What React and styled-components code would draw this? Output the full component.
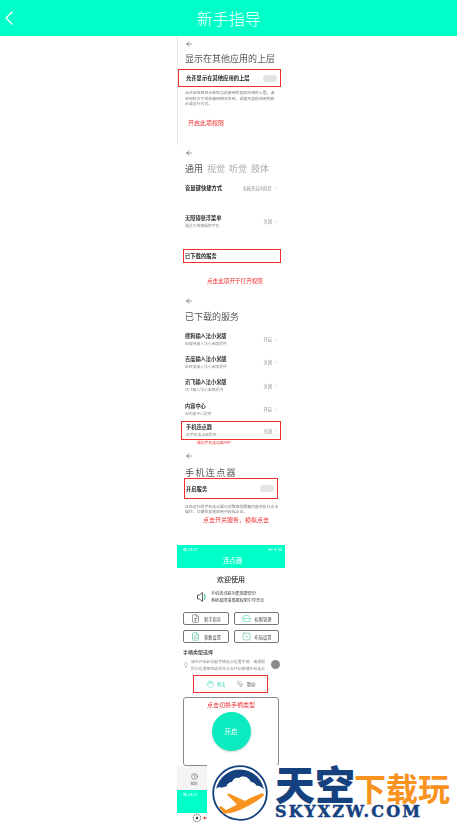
import React from 'react';
import styled, { createGlobalStyle } from 'styled-components';
import { ChevronRight, ArrowLeft, ChevronLeft, FileType, HardDrive, FileText, SquareDot, Hand, MousePointerClick, Lightbulb, HelpCircle } from 'lucide-react';

const GREEN = '#00ffc8';
const RED = '#ee3030';
const FONT = '"Noto Sans CJK SC", "Noto Sans", sans-serif';

const Global = createGlobalStyle`
  html, body { margin: 0; padding: 0; background: #fff; overflow: hidden; }
  body { font-family: ${FONT}; width: 457px; height: 823px; }
  * { box-sizing: border-box; }
`;

const Page = styled.div`
  position: relative;
  width: 457px;
  height: 823px;
  overflow: hidden;
`;
const Header = styled.header`
  height: 36px;
  background: ${GREEN};
  color: #fff;
  display: flex;
  align-items: center;
  justify-content: center;
  position: relative;
  font-size: 16px;
  font-weight: 300;
`;
const HeaderBack = styled.span`
  position: absolute;
  left: -3px;
  top: 6px;
  display: flex;
  color: #fff;
`;
const Column = styled.main`
  width: 108px;
  margin-left: 177px;
  filter: blur(0.4px);
`;
const Section = styled.section`
  height: ${p => p.$h}px;
  padding: ${p => p.$top}px 4px 0 8px;
  ${p => p.$line && 'border-left: 1px solid #e6e6e6; padding-left: 7px;'}
`;
const Back = styled.div`
  height: 6px;
  display: flex;
  align-items: center;
  color: #333;
`;
const Title = styled.h2`
  margin: ${p => p.$mt}px 0 0;
  height: 12px;
  line-height: 12px;
  font-size: 9px;
  font-weight: 400;
  letter-spacing: ${p => p.$ls || 0}px;
  color: #555;
  white-space: nowrap;
`;
const Tabs = styled.div`
  margin-top: 7px;
  height: 12px;
  display: flex;
  gap: 4px;
`;
const Tab = styled.span`
  font-size: 9px;
  line-height: 12px;
  color: ${p => (p.$on ? '#555' : '#aaa')};
`;
const RedBox = styled.div`
  margin: ${p => p.$mt}px 0 0 ${p => p.$ml}px;
  width: ${p => p.$w}px;
  height: ${p => p.$h}px;
  border: 1px solid ${RED};
  display: flex;
  align-items: center;
  justify-content: space-between;
  padding: 0 3px 0 ${p => p.$pl || 1}px;
`;
const BoldLabel = styled.span`
  font-size: 5.3px;
  font-weight: 700;
  color: #222;
  white-space: nowrap;
`;
const Toggle = styled.span`
  width: 14px;
  height: 7px;
  border-radius: 4px;
  background: #e4e4e4;
  display: block;
`;
const Desc = styled.p`
  margin: ${p => p.$mt}px 0 0;
  width: ${p => p.$w}px;
  font-size: 3.9px;
  line-height: ${p => p.$lh || 5.6}px;
  color: #777;
`;
const RedNote = styled.div`
  margin: ${p => p.$mt}px 0 0 ${p => p.$ml}px;
  height: ${p => p.$h || 8}px;
  line-height: ${p => p.$h || 8}px;
  font-size: ${p => p.$size}px;
  color: ${RED};
  white-space: nowrap;
`;
const Row = styled.div`
  margin-top: ${p => p.$mt}px;
  height: ${p => p.$h || 16}px;
  width: 94px;
  display: flex;
  align-items: center;
  justify-content: space-between;
`;
const BoxedRow = styled(Row)`
  width: 100px;
  margin-left: -4px;
  padding: 1px 1px 0 4px;
  border: 1px solid ${RED};
`;
const RowText = styled.div`
  display: flex;
  flex-direction: column;
  gap: 1.5px;
`;
const RowTitle = styled.span`
  font-size: 5.2px;
  line-height: 6.5px;
  font-weight: 700;
  color: #333;
  white-space: nowrap;
`;
const RowSub = styled.span`
  font-size: 3.8px;
  line-height: 5px;
  color: #888;
  white-space: nowrap;
`;
const RowValue = styled.span`
  display: flex;
  align-items: center;
  gap: 2px;
  font-size: 4.2px;
  color: #888;
  white-space: nowrap;
`;
const GreenBar = styled.div`
  height: 23px;
  background: ${GREEN};
  color: #fff;
  padding: 2px 3px 0 6px;
`;
const StatusRow = styled.div`
  height: 6px;
  display: flex;
  justify-content: space-between;
  font-size: 3.6px;
  line-height: 6px;
`;
const BarTitle = styled.div`
  margin-top: 3px;
  text-align: center;
  font-size: 6.4px;
  line-height: 9px;
`;
const Welcome = styled.h3`
  margin: 0;
  height: 10px;
  line-height: 10px;
  text-align: center;
  font-size: 7px;
  font-weight: 500;
  color: #333;
  width: 92px;
`;
const Intro = styled.div`
  margin: 6px 0 0 12px;
  height: 13px;
  display: flex;
  align-items: center;
  gap: 4px;
`;
const IntroText = styled.p`
  margin: 0;
  font-size: 4.1px;
  line-height: 6.5px;
  color: #444;
  white-space: nowrap;
`;
const ToolGrid = styled.div`
  margin: 9px 0 0 -2px;
  width: 96px;
  display: grid;
  grid-template-columns: 46px 45px;
  grid-auto-rows: 13px;
  gap: 5px;
`;
const ToolButton = styled.button`
  border: 1px solid #777;
  border-radius: 2px;
  background: #fff;
  padding: 0;
  display: flex;
  align-items: center;
  justify-content: center;
  gap: 4px;
  font-family: ${FONT};
  font-size: 4.2px;
  color: #444;
`;
const SubHead = styled.div`
  margin: 5px 0 0 -2px;
  height: 7px;
  line-height: 7px;
  font-size: 5px;
  font-weight: 500;
  color: #333;
  white-space: nowrap;
`;
const Hint = styled.div`
  position: relative;
  margin: 3px 0 0 -2px;
  height: 14px;
  display: flex;
  align-items: center;
  gap: 2px;
  color: #555;
`;
const HintText = styled.p`
  margin: 0;
  font-size: 3.9px;
  line-height: 7px;
  color: #888;
  white-space: nowrap;
`;
const FloatDot = styled.span`
  position: absolute;
  left: 88px;
  top: 2px;
  width: 9px;
  height: 9px;
  border-radius: 50%;
  background: #8a8a8a;
`;
const TypeBox = styled.div`
  margin: 3px 0 0 8px;
  width: 75px;
  height: 18px;
  border: 1px solid ${RED};
  display: flex;
  align-items: center;
  justify-content: center;
  gap: 10px;
`;
const TypeOption = styled.span`
  display: flex;
  align-items: center;
  gap: 3px;
  font-size: 4.4px;
  color: ${p => (p.$on ? '#25cfa9' : '#555')};
`;
const StartCard = styled.div`
  margin: 4px 0 0 -2px;
  width: 96px;
  height: 69px;
  border: 1px solid #8a8a8a;
  border-radius: 3px;
  display: flex;
  flex-direction: column;
  align-items: center;
  padding-top: 3px;
`;
const CardNote = styled.div`
  height: 8px;
  line-height: 8px;
  font-size: 6px;
  color: ${RED};
  white-space: nowrap;
`;
const StartButton = styled.button`
  margin-top: 3px;
  width: 39px;
  height: 39px;
  border: 0;
  border-radius: 50%;
  background: #0cebc0;
  box-shadow: 0 1px 2px rgba(0, 0, 0, 0.2);
  color: #fff;
  font-family: ${FONT};
  font-size: 6.4px;
  padding: 0;
`;
const SideStack = styled.aside`
  position: absolute;
  left: 177px;
  top: 766px;
  filter: blur(0.4px);
`;
const SideTab = styled.div`
  width: 30px;
  height: 24px;
  background: #f4f4f4;
  display: flex;
  flex-direction: column;
  align-items: center;
  justify-content: center;
  gap: 1px;
  padding: 3px 0 0 4px;
  color: #666;
  font-size: 3.6px;
`;
const SideGreen = styled.div`
  width: 30px;
  height: 23px;
  background: ${GREEN};
  color: #fff;
  font-size: 3.6px;
  line-height: 6px;
  padding: 2px 0 0 6px;
`;
const SideFoot = styled.div`
  width: 30px;
  height: 10px;
  display: flex;
  align-items: center;
  justify-content: flex-end;
  gap: 1px;
`;

/* watermark sits over the page */
const Logo = styled.div`
  position: absolute;
  left: 207px;
  top: 765px;
  width: 250px;
  height: 58px;
  background: #fff;
  display: flex;
  padding-left: 5px;
`;
const LogoText = styled.div`
  margin-left: 7px;
  display: flex;
  flex-direction: column;
`;
const LogoTop = styled.div`
  display: flex;
  align-items: flex-end;
  height: 37px;
`;
const LogoSky = styled.span`
  font-size: 40px;
  line-height: 37px;
  font-weight: 900;
  color: #16417f;
  white-space: nowrap;
`;
const LogoCn = styled.span`
  font-size: 32px;
  line-height: 30px;
  font-weight: 700;
  color: #f7931e;
  white-space: nowrap;
  margin-left: -1px;
`;
const LogoUrl = styled.div`
  margin-top: 1px;
  font-family: "DejaVu Serif", serif;
  font-size: 16px;
  line-height: 18px;
  font-weight: 700;
  letter-spacing: 2.1px;
  -webkit-text-stroke: 0.5px #16417f;
  color: #16417f;
  white-space: nowrap;
`;

function BackArrow() {
  return <Back><ArrowLeft size={8} strokeWidth={1.6} /></Back>;
}

function Service({ title, sub, value, mt }) {
  return (
    <Row $mt={mt}>
      <RowText>
        <RowTitle>{title}</RowTitle>
        <RowSub>{sub}</RowSub>
      </RowText>
      <RowValue>{value}<ChevronRight size={5} color="#aaa" /></RowValue>
    </Row>
  );
}

function Speaker() {
  return (
    <svg width="10" height="12" viewBox="0 0 10 12">
      <path d="M0.500 4H2.500L5.500 1.500V10.500L2.500 8H0.500Z" fill="none" stroke="#333" strokeWidth="0.8" />
      <path d="M7 3.500C8.500 5 8.500 7 7 8.500" fill="none" stroke="#35c98a" strokeWidth="1.100" />
    </svg>
  );
}

function LogoMark() {
  return (
    <svg width="56" height="56" viewBox="0 0 56 56">
      <circle cx="28" cy="28" r="26.800" fill="#fff" stroke="#16417f" strokeWidth="1.800" />
      <path d="M4 24C7 12 17 4.500 28 4.500S49 12 52 24C49 22 47 20 45 21C43 18 41 17 39 17C37 12 31 10 27 13C24 12 21 14 20 17C17 17 15 19 14 22C11 21 10 24 8 22C6 22 5 23 4 24Z" fill="#16417f" />
      <path d="M51 28C45 30 38 33 33 36L17 28.500L15 29.500L25 39.500C20 42 17 44 14 45L9 41L7 42L11 47.500L10 48.500C17 49 23 47 28 45L38 40C43 37 50 33 52 30Z" fill="#f7931e" />
    </svg>
  );
}

function Gear() {
  return (
    <svg width="10" height="10" viewBox="0 0 10 10">
      <circle cx="5" cy="5" r="3.800" fill="none" stroke="#333" strokeWidth="0.800" strokeDasharray="1.500 0.800" />
      <circle cx="5" cy="5" r="1.200" fill="#333" />
    </svg>
  );
}

function SideStackPanel() {
  return (
    <SideStack>
      <SideTab>
        <HelpCircle size={7} strokeWidth={2} />
        帮助
      </SideTab>
      <SideGreen>晚上9:11</SideGreen>
      <SideFoot>
        <Gear />
        <svg width="4" height="4" viewBox="0 0 4 4"><path d="M0 2L2 0.500V1.400H4V2.600H2V3.500Z" fill={RED} /></svg>
      </SideFoot>
    </SideStack>
  );
}

export default function App() {
  return (
    <Page>
      <Global />
      <Header>
        <HeaderBack><ChevronLeft size={24} strokeWidth={1.4} /></HeaderBack>
        新手指导
      </Header>
      <Column>
        <Section $h={109} $top={5} $line>
          <BackArrow />
          <Title $mt={6}>显示在其他应用的上层</Title>
          <RedBox $mt={4} $ml={-7} $w={103} $h={18} $pl={7}>
            <BoldLabel>允许显示在其他应用的上层</BoldLabel>
            <Toggle />
          </RedBox>
          <Desc $mt={3} $w={90}>
            允许此应用显示在您当前使用的其他应用的上层。该应用将会干扰您使用相关应用，或更改其他应用的显示或运行方式。
          </Desc>
          <RedNote $mt={12} $ml={3} $size={6}>开启此项权限</RedNote>
        </Section>

        <Section $h={150} $top={5}>
          <BackArrow />
          <Tabs>
            <Tab $on>通用</Tab><Tab>视觉</Tab><Tab>听觉</Tab><Tab>肢体</Tab>
          </Tabs>
          <Row $mt={6} $h={14}>
            <BoldLabel>音量键快捷方式</BoldLabel>
            <RowValue>长按开启闪光灯<ChevronRight size={5} color="#aaa" /></RowValue>
          </Row>
          <Row $mt={18}>
            <RowText>
              <RowTitle>无障碍悬浮菜单</RowTitle>
              <RowSub>通过大按键操控手机</RowSub>
            </RowText>
            <RowValue>关闭<ChevronRight size={5} color="#aaa" /></RowValue>
          </Row>
          <RedBox $mt={20} $ml={-2} $w={98} $h={14}>
            <BoldLabel>已下载的服务</BoldLabel>
            <ChevronRight size={5} color="#aaa" />
          </RedBox>
          <RedNote $mt={14} $ml={22} $size={5.600}>点击此项开于打开权限</RedNote>
        </Section>

        <Section $h={150} $top={3}>
          <BackArrow />
          <Title $mt={7}>已下载的服务</Title>
          <Service mt={8} title="搜狗输入法小米版" sub="由搜狗输入法小米版提供" value="开启" />
          <Service mt={7.400} title="百度输入法小米版" sub="由百度输入法小米版提供" value="关闭" />
          <Service mt={7.400} title="讯飞输入法小米版" sub="讯飞输入法小米版提供" value="关闭" />
          <Service mt={7.400} title="内容中心" sub="由内容中心提供" value="开启" />
          <BoxedRow $mt={3.800} $h={19}>
            <RowText>
              <RowTitle>手机连点器</RowTitle>
              <RowSub>由手机连点器提供</RowSub>
            </RowText>
            <RowValue>关闭<ChevronRight size={5} color="#aaa" /></RowValue>
          </BoxedRow>
          <RedNote $mt={0} $ml={12} $size={3.800} $h={6}>成功手机连点器APP</RedNote>
        </Section>

        <Section $h={100} $top={8}>
          <BackArrow />
          <Title $mt={8} $ls={1.400}>手机连点器</Title>
          <RedBox $mt={-1} $ml={-1} $w={94} $h={21}>
            <BoldLabel>开启服务</BoldLabel>
            <Toggle />
          </RedBox>
          <Desc $mt={5} $w={96} $lh={4.500}>
            正在运行的手机连点器可读取您的屏幕内容并执行点击操作，以便在其他应用中模拟点击。
          </Desc>
          <RedNote $mt={3} $ml={18} $size={6}>点击开关服务，模拟点击</RedNote>
        </Section>

        <GreenBar>
          <StatusRow><span>晚上9:37</span><span>4G 令 80</span></StatusRow>
          <BarTitle>连点器</BarTitle>
        </GreenBar>

        <Section $h={198} $top={6}>
          <Welcome>欢迎使用</Welcome>
          <Intro>
            <Speaker />
            <IntroText>手机连点器功能需要部分<br />系统权限请根据权限引导开启</IntroText>
          </Intro>
          <ToolGrid>
            <ToolButton><FileType size={9} strokeWidth={1.200} color="#333" />新手指导</ToolButton>
            <ToolButton><HardDrive size={9} strokeWidth={1.200} color="#22c79f" />权限管理</ToolButton>
            <ToolButton><FileText size={9} strokeWidth={1.200} color="#22a070" />参数设置</ToolButton>
            <ToolButton><SquareDot size={9} strokeWidth={1.200} color="#22a070" />布局设置</ToolButton>
          </ToolGrid>
          <SubHead>手柄类型选择</SubHead>
          <Hint>
            <Lightbulb size={6} strokeWidth={1.200} />
            <HintText>请先开启此功能手柄连点设置手柄，请根据<br />提示设置相应选项并点击开始按键开启连点</HintText>
            <FloatDot />
          </Hint>
          <TypeBox>
            <TypeOption $on><Hand size={8} strokeWidth={1.200} />单击</TypeOption>
            <TypeOption><MousePointerClick size={8} strokeWidth={1.200} />滑动</TypeOption>
          </TypeBox>
          <StartCard>
            <CardNote>点击切换手柄类型</CardNote>
            <StartButton>开启</StartButton>
          </StartCard>
        </Section>
      </Column>
      <SideStackPanel />
      <Logo>
        <LogoMark />
        <LogoText>
          <LogoTop>
            <LogoSky>天空</LogoSky>
            <LogoCn>下载玩</LogoCn>
          </LogoTop>
          <LogoUrl>SKYXZW.COM</LogoUrl>
        </LogoText>
      </Logo>
    </Page>
  );
}
